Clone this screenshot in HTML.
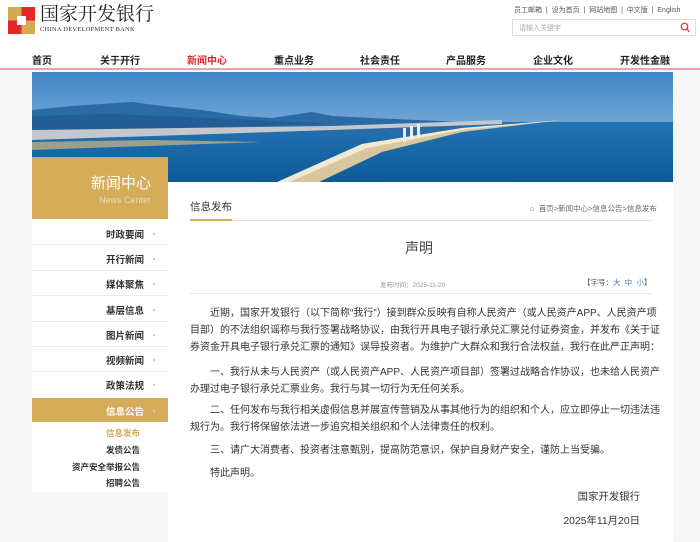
<!DOCTYPE html>
<html><head><meta charset="utf-8"><style>
*{margin:0;padding:0;box-sizing:border-box}
body{width:700px;height:537px;overflow:hidden;background:#f5f5f5;font-family:"Liberation Sans","Noto Sans CJK SC",sans-serif;position:relative;color:#333}
.a{position:absolute;white-space:nowrap}
.top{position:absolute;left:0;top:0;width:700px;height:70px;background:#fff;border-bottom:2px solid #e9a3a8}
.nav span{position:absolute;top:52px;font-size:10px;font-weight:bold;color:#222;transform:translateX(-50%)}
.side{position:absolute;left:32px;top:219px;width:136px;height:273px;background:#fff}
.si{position:absolute;right:24px;font-size:9.5px;font-weight:bold;color:#333}
.si:after{content:"";position:absolute;right:-11px;top:6px;width:2px;height:2px;background:#ccc}
.sep{position:absolute;left:0;width:136px;height:1px;background:#ececec}
.card{position:absolute;left:168px;top:182px;width:505px;height:360px;background:#fff}
.p{position:absolute;left:190px;width:452px;font-size:10px;color:#333;line-height:17px}
.j{text-align:justify;text-align-last:justify;white-space:nowrap;display:block;height:17px}
</style></head><body>
<div class="top"></div>
<svg class="a" style="left:8px;top:7px" width="27" height="27" viewBox="0 0 27 27">
<rect x="0" y="0" width="13.5" height="13.5" fill="#d5a852"/><rect x="13.5" y="0" width="13.5" height="13.5" fill="#e3262a"/>
<rect x="0" y="13.5" width="13.5" height="13.5" fill="#e3262a"/><rect x="13.5" y="13.5" width="13.5" height="13.5" fill="#d5a852"/>
<rect x="9" y="9" width="9" height="9" fill="#fff"/></svg>
<div class="a" style="left:40px;top:5px;font-size:19px;line-height:19px;font-family:'Liberation Serif','Noto Serif CJK SC',serif;color:#222">国家开发银行</div>
<div class="a" style="left:40px;top:26px;font-size:6.4px;line-height:7px;font-family:'Liberation Serif',serif;color:#333;letter-spacing:0.3px">CHINA DEVELOPMENT BANK</div>
<div class="a" style="left:514px;top:5px;font-size:7px;color:#555">员工邮箱 &nbsp;|&nbsp; 设为首页 &nbsp;|&nbsp; 网站地图 &nbsp;|&nbsp; 中文版 &nbsp;|&nbsp; English</div>
<div class="a" style="left:512px;top:19px;width:184px;height:17px;border:1px solid #ddd;background:#fff"></div>
<div class="a" style="left:519px;top:23px;font-size:7px;color:#aaa">请输入关键字</div>
<svg class="a" style="left:680px;top:22px" width="10" height="11" viewBox="0 0 10 11"><circle cx="4.5" cy="4.5" r="3.3" fill="none" stroke="#d33" stroke-width="1.2"/><line x1="7" y1="7" x2="9.3" y2="9.8" stroke="#d33" stroke-width="1.3"/></svg>
<div class="nav">
<span style="left:42px">首页</span><span style="left:120px">关于开行</span><span style="left:207px;color:#d4262b">新闻中心</span><span style="left:294px">重点业务</span><span style="left:380px">社会责任</span><span style="left:466px">产品服务</span><span style="left:553px">企业文化</span><span style="left:645px">开发性金融</span>
</div>
<div class="a" style="left:0;top:72px;width:700px;height:465px;background:#f7f7f7"></div>
<svg class="a" style="left:32px;top:72px" width="641" height="111" viewBox="0 0 641 111">
<defs><linearGradient id="s" x1="0" y1="0" x2="0" y2="1"><stop offset="0" stop-color="#3f86c8"/><stop offset="1" stop-color="#a9cbe6"/></linearGradient>
<linearGradient id="w" x1="0" y1="0" x2="0" y2="1"><stop offset="0" stop-color="#2473b3"/><stop offset="1" stop-color="#0e5a98"/></linearGradient></defs>
<rect width="641" height="111" fill="url(#s)"/>
<rect y="50" width="641" height="61" fill="url(#w)"/>
<path d="M0 38 L40 34 L70 32 L100 30 L130 34 L170 38 L210 44 L240 46 L280 40 L300 44 L340 46 L430 50 L430 60 L0 62 Z" fill="#2a6aa5"/>
<path d="M0 44 L80 42 L180 46 L300 52 L0 60Z" fill="#225d95"/>
<path d="M0 58 L150 56 L300 54 L470 48 L470 52 L300 58 L0 68Z" fill="#c4c8cc"/>
<path d="M0 70 L120 68 L230 70 L0 78Z" fill="#9aa08e"/>
<path d="M243 111 L330 72 L430 56 L530 48 L430 60 L350 80 L285 111Z" fill="#d8c79c"/>
<path d="M243 111 L330 72 L430 56 L530 48 L430 58 L335 76 L255 111Z" fill="#f0e9d4"/>
<rect x="371" y="56" width="3" height="14" fill="#eee"/><rect x="378" y="54" width="3" height="14" fill="#eee"/><rect x="385" y="52" width="3" height="14" fill="#eee"/>
</svg>
<div class="a" style="left:32px;top:157px;width:136px;height:62px;background:#d5ac58"></div>
<div class="a" style="right:549px;top:172px;font-size:15px;color:#fff">新闻中心</div>
<div class="a" style="right:549px;top:195px;font-size:9px;color:#f1dcae">News Center</div>
<div class="side">
<div class="si" style="top:8px">时政要闻</div><div class="sep" style="top:25px"></div>
<div class="si" style="top:33px">开行新闻</div><div class="sep" style="top:51px"></div>
<div class="si" style="top:58px">媒体聚焦</div><div class="sep" style="top:76px"></div>
<div class="si" style="top:84px">基层信息</div><div class="sep" style="top:102px"></div>
<div class="si" style="top:109px">图片新闻</div><div class="sep" style="top:127px"></div>
<div class="si" style="top:134px">视频新闻</div><div class="sep" style="top:152px"></div>
<div class="si" style="top:159px">政策法规</div>
<div style="position:absolute;left:0;top:179px;width:136px;height:24px;background:#d5ac58"></div>
<div class="si" style="top:185px;color:#fff">信息公告</div>
<div style="position:absolute;right:28px;top:208px;font-size:8.5px;color:#d5ac58;font-weight:bold">信息发布</div>
<div style="position:absolute;right:28px;top:225px;font-size:8.5px;font-weight:bold">发债公告</div>
<div style="position:absolute;right:28px;top:242px;font-size:8.5px;font-weight:bold">资产安全举报公告</div>
<div style="position:absolute;right:28px;top:258px;font-size:8.5px;font-weight:bold">招聘公告</div>
</div>
<div class="card"></div>
<div class="a" style="left:190px;top:199px;font-size:10.5px;color:#333">信息发布</div>
<div class="a" style="left:190px;top:220px;width:462px;height:1px;background:#e2e2e2"></div>
<div class="a" style="left:190px;top:219px;width:42px;height:2px;background:#d5ac58"></div>
<div class="a" style="left:530px;top:203px;font-size:7.5px;color:#666">&#8962; &nbsp;首页&gt;新闻中心&gt;信息公告&gt;信息发布</div>
<div class="a" style="left:405px;top:238px;font-size:14px;color:#444">声明</div>
<div class="a" style="left:380px;top:279px;font-size:6.5px;color:#999">发布时间：2025-11-20</div>
<div class="a" style="left:583px;top:277px;font-size:7.5px;color:#555">【字号：<span style="color:#3a7bbf">大 &nbsp;中 &nbsp;小</span>】</div>
<div class="a" style="left:190px;top:293px;width:462px;height:1px;background:#e8e8e8"></div>
<div class="p" style="top:305px">
<span class="j">&emsp;&emsp;近期，国家开发银行（以下简称“我行”）接到群众反映有自称人民资产（或人民资产APP、人民资产项</span>
<span class="j">目部）的不法组织谣称与我行签署战略协议，由我行开具电子银行承兑汇票兑付证券资金，并发布《关于证</span>
<span class="j">券资金开具电子银行承兑汇票的通知》误导投资者。为维护广大群众和我行合法权益，我行在此严正声明：</span>
</div>
<div class="p" style="top:364px">
<span class="j">&emsp;&emsp;一、我行从未与人民资产（或人民资产APP、人民资产项目部）签署过战略合作协议，也未给人民资产</span>
<span style="display:block">办理过电子银行承兑汇票业务。我行与其一切行为无任何关系。</span>
</div>
<div class="p" style="top:402px">
<span class="j">&emsp;&emsp;二、任何发布与我行相关虚假信息并展宣传营销及从事其他行为的组织和个人，应立即停止一切违法违</span>
<span style="display:block">规行为。我行将保留依法进一步追究相关组织和个人法律责任的权利。</span>
</div>
<div class="p" style="top:442px">&emsp;&emsp;三、请广大消费者、投资者注意甄别，提高防范意识，保护自身财产安全，谨防上当受骗。</div>
<div class="p" style="top:465px">&emsp;&emsp;特此声明。</div>
<div class="a" style="right:60px;top:488px;font-size:10.4px">国家开发银行</div>
<div class="a" style="right:60px;top:512px;font-size:10.4px">2025年11月20日</div>
</body></html>
